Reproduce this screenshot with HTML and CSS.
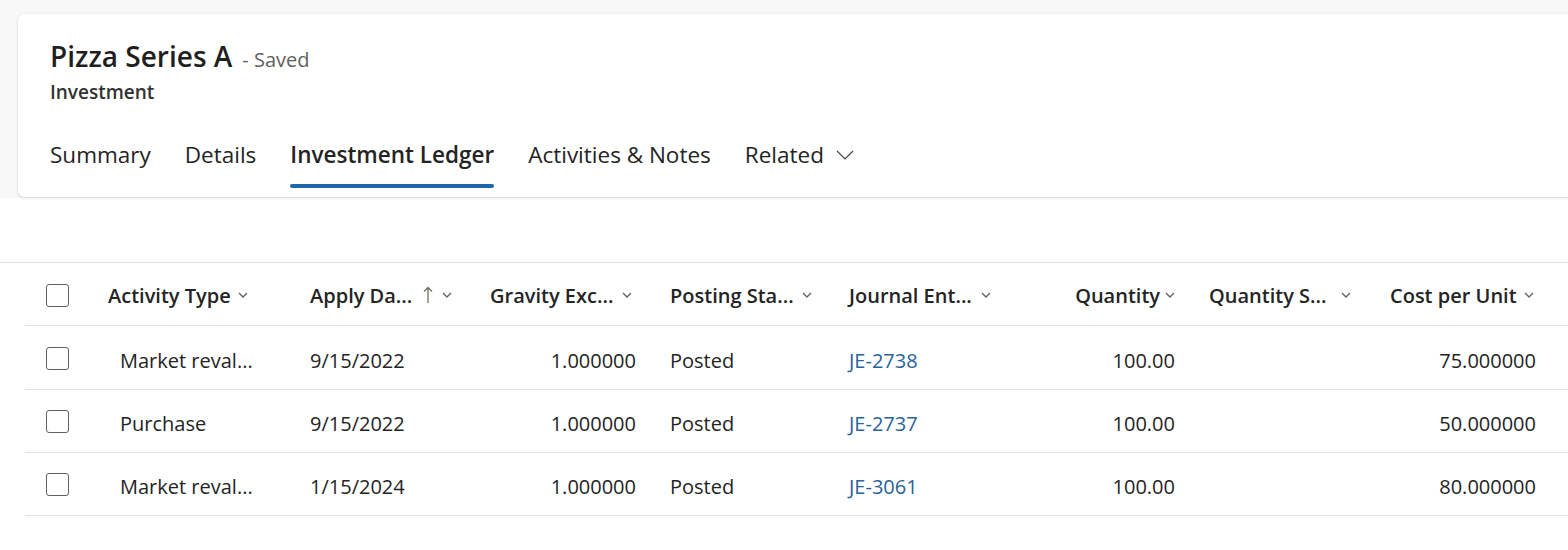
FILE: index.html
```html
<!DOCTYPE html>
<html lang="en">
<head>
    <meta charset="UTF-8">
    <title>Pizza Series A - Investment</title>
    <link rel="stylesheet" href="styles.css">
</head>
<body>
    <div class="header-band">
        <div class="record-card">
            <div class="record-title">
                <h1>Pizza Series A</h1>
                <span class="save-state">- Saved</span>
            </div>
            <div class="record-entity">Investment</div>
            <nav class="tabs">
                <a class="tab">Summary</a>
                <a class="tab">Details</a>
                <a class="tab active">Investment Ledger</a>
                <a class="tab">Activities &amp; Notes</a>
                <a class="tab">Related
                    <svg class="tab-chevron" width="18" height="10" viewBox="0 0 18 10"><path d="M1 1l8 8 8-8" fill="none" stroke="#444" stroke-width="1.2"/></svg>
                </a>
            </nav>
        </div>
    </div>

    <div class="subgrid">
        <div class="grid-row grid-head">
            <div class="cell"><span class="checkbox"></span></div>
            <div class="cell head-cell"><span class="col-label">Activity Type</span><svg class="chev" width="10" height="6" viewBox="0 0 10 6"><path d="M1 1l4 4 4-4"/></svg></div>
            <div class="cell head-cell"><span class="col-label clip date-label" title="Apply Date">Apply Da...</span><svg class="sort-arrow" width="10" height="18" viewBox="0 0 10 18"><path d="M5 17V1.5M1 5.5l4-4 4 4"/></svg><svg class="chev" width="10" height="6" viewBox="0 0 10 6"><path d="M1 1l4 4 4-4"/></svg></div>
            <div class="cell head-cell"><span class="col-label clip" title="Gravity Exchange Rate">Gravity Exc...</span><svg class="chev" width="10" height="6" viewBox="0 0 10 6"><path d="M1 1l4 4 4-4"/></svg></div>
            <div class="cell head-cell"><span class="col-label clip" title="Posting Status">Posting Sta...</span><svg class="chev" width="10" height="6" viewBox="0 0 10 6"><path d="M1 1l4 4 4-4"/></svg></div>
            <div class="cell head-cell"><span class="col-label clip" title="Journal Entry">Journal Ent...</span><svg class="chev" width="10" height="6" viewBox="0 0 10 6"><path d="M1 1l4 4 4-4"/></svg></div>
            <div class="cell head-cell num"><span class="col-label">Quantity</span><svg class="chev" width="10" height="6" viewBox="0 0 10 6"><path d="M1 1l4 4 4-4"/></svg></div>
            <div class="cell head-cell"><span class="col-label clip" title="Quantity Sold">Quantity S...</span><svg class="chev" width="10" height="6" viewBox="0 0 10 6"><path d="M1 1l4 4 4-4"/></svg></div>
            <div class="cell head-cell"><span class="col-label">Cost per Unit</span><svg class="chev" width="10" height="6" viewBox="0 0 10 6"><path d="M1 1l4 4 4-4"/></svg></div>
        </div>

        <div class="grid-row first-row">
            <div class="cell"><span class="checkbox"></span></div>
            <div class="cell type-cell">Market reval...</div>
            <div class="cell">9/15/2022</div>
            <div class="cell num">1.000000</div>
            <div class="cell">Posted</div>
            <div class="cell"><a class="link">JE-2738</a></div>
            <div class="cell num">100.00</div>
            <div class="cell"></div>
            <div class="cell num">75.000000</div>
        </div>
        <div class="grid-row">
            <div class="cell"><span class="checkbox"></span></div>
            <div class="cell type-cell">Purchase</div>
            <div class="cell">9/15/2022</div>
            <div class="cell num">1.000000</div>
            <div class="cell">Posted</div>
            <div class="cell"><a class="link">JE-2737</a></div>
            <div class="cell num">100.00</div>
            <div class="cell"></div>
            <div class="cell num">50.000000</div>
        </div>
        <div class="grid-row">
            <div class="cell"><span class="checkbox"></span></div>
            <div class="cell type-cell">Market reval...</div>
            <div class="cell">1/15/2024</div>
            <div class="cell num">1.000000</div>
            <div class="cell">Posted</div>
            <div class="cell"><a class="link">JE-3061</a></div>
            <div class="cell num">100.00</div>
            <div class="cell"></div>
            <div class="cell num">80.000000</div>
        </div>
    </div>
</body>
</html>
```

FILE: styles.css
```css
body {
    margin: 0;
    background-color: #ffffff;
    font-family: "Segoe UI", "Open Sans", sans-serif;
    color: #242424;
}
.header-band {
    background-color: #f8f8f8;
    padding: 14px 0 1px 18px;
}
.record-card {
    background-color: #ffffff;
    border-radius: 6px 0 0 6px;
    box-shadow: 0 1px 3px rgba(0, 0, 0, 0.14), 0 0 1px rgba(0, 0, 0, 0.1);
    height: 183px;
    padding: 24px 0 0 32px;
    box-sizing: border-box;
}
.record-title {
    display: flex;
    align-items: baseline;
    gap: 10px;
    height: 36px;
}
.record-title h1 {
    margin: 0;
    font-size: 28px;
    font-weight: 600;
    line-height: 36px;
    color: #1f1f1f;
}
.save-state {
    font-size: 20px;
    color: #616161;
}
.record-entity {
    margin-top: 5px;
    font-size: 19px;
    font-weight: 600;
    line-height: 26px;
    color: #323232;
}
.tabs {
    display: flex;
    margin-top: 25px;
    margin-left: -17px;
}
.tab {
    position: relative;
    display: flex;
    align-items: center;
    gap: 12px;
    padding: 0 17px 10px;
    height: 48px;
    font-size: 22.5px;
    color: #242424;
    cursor: pointer;
}
.tab.active {
    font-weight: 600;
}
.tab.active::after {
    content: "";
    position: absolute;
    left: 17px;
    right: 17px;
    bottom: 0;
    height: 4px;
    border-radius: 2px;
    background-color: #1f67ad;
}
.tab-chevron {
    margin-top: 2px;
}
.subgrid {
    margin-top: 64px;
    border-top: 1px solid #e0e0e0;
}
.grid-row {
    display: grid;
    grid-template-columns: 71px 202px 180px 180px 179px 180px 180px 181px 180px;
    box-sizing: border-box;
    height: 63px;
    margin-left: 25px;
    border-bottom: 1px solid #e0e0e0;
    font-size: 20px;
}
.grid-row.first-row {
    height: 64px;
}
.cell {
    display: flex;
    align-items: center;
    padding: 5px 12px 0;
    white-space: nowrap;
    overflow: hidden;
}
.grid-head .cell {
    padding-top: 2px;
}
.cell.num {
    justify-content: flex-end;
    padding-right: 22px;
}
.type-cell {
    padding-left: 24px;
}
.checkbox {
    display: block;
    width: 21px;
    height: 21px;
    margin-left: 9px;
    margin-top: -4px;
    border: 1px solid #616161;
    border-radius: 3px;
}
.grid-head .checkbox {
    margin-top: 0;
}
.head-cell {
    font-weight: 600;
    color: #242424;
}
.col-label.clip {
    width: 125px;
}
.col-label.date-label {
    width: 107px;
}
.chev {
    margin-left: 7px;
    fill: none;
    stroke: #616161;
    stroke-width: 1.3;
}
.sort-arrow {
    margin-left: 6px;
    margin-right: 2px;
    fill: none;
    stroke: #6e6e5e;
    stroke-width: 1.3;
}
.head-cell.num .chev {
    margin-left: 5px;
}
.link {
    color: #2a6399;
    cursor: pointer;
}
```
